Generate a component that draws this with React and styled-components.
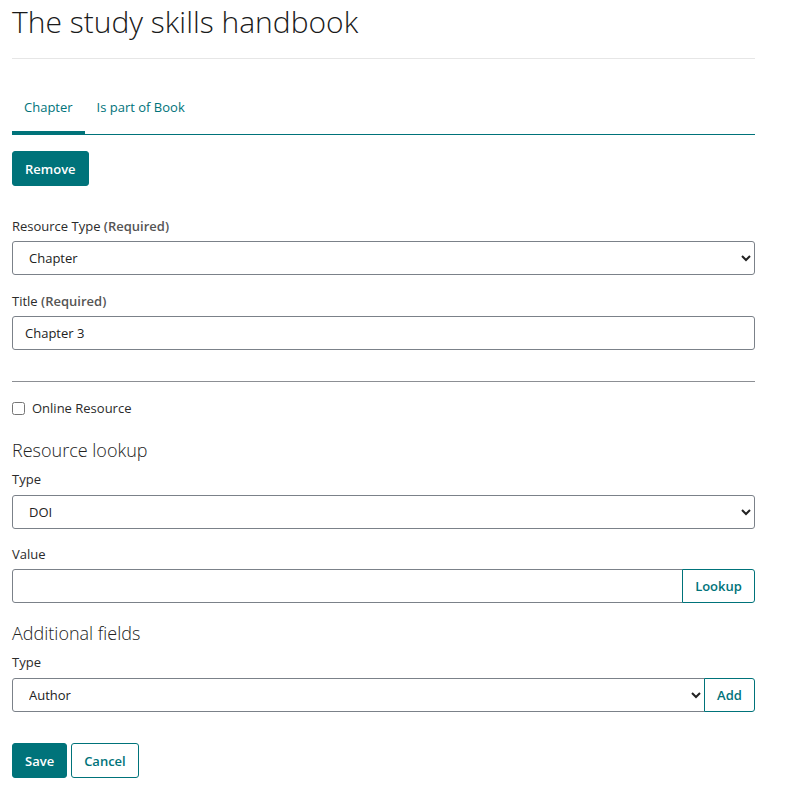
import React from "react";
import styled, { createGlobalStyle } from "styled-components";

const teal = "#00737a";
const inputBorder = "#7b8189";

const Global = createGlobalStyle`
  html, body { margin: 0; padding: 0; background: #fff; }
  body {
    font-family: "Open Sans", "Noto Sans", sans-serif;
    color: #222;
    font-size: 13px;
  }
  * { box-sizing: border-box; }
`;

const Page = styled.div`
  width: 743px;
  margin: 0 12px;
  padding-bottom: 24px;
`;

const Title = styled.h1`
  margin: 0;
  padding: 3px 0 17px;
  font-size: 30px;
  font-weight: 300;
  line-height: 38px;
  color: #1a1a1a;
  border-bottom: 1px solid #e6e6e6;
`;

const TabList = styled.div`
  display: flex;
  margin-top: 30px;
  border-bottom: 1px solid ${teal};
`;

const Tab = styled.div`
  padding: 9px 12px 15px;
  line-height: 18px;
  font-size: 13px;
  color: ${teal};
  margin-bottom: -1px;
  border-bottom: 4px solid ${(p) => (p.$active ? teal : "transparent")};
`;

const Button = styled.button`
  font-family: inherit;
  font-size: 13px;
  font-weight: 600;
  height: 35px;
  padding: 0 12px;
  border-radius: 3px;
  border: 1px solid ${teal};
  background: ${(p) => (p.$primary ? teal : "#fff")};
  color: ${(p) => (p.$primary ? "#fff" : teal)};
  cursor: pointer;
`;

const TopAction = styled.div`
  margin-top: 16px;
  margin-bottom: 31px;
`;

const Field = styled.div`
  margin-bottom: ${(p) => (p.$tight ? "16px" : "17px")};
`;

const Label = styled.label`
  display: block;
  font-size: 13px;
  line-height: 18px;
  color: #2b2b2b;
  margin-bottom: ${(p) => (p.$loose ? "7px" : "6px")};
`;

const Hint = styled.span`
  font-weight: 600;
  color: #555;
`;

const Select = styled.select`
  display: block;
  width: 100%;
  height: 34px;
  font-family: inherit;
  font-size: 13px;
  color: #222;
  padding: 0 8px 0 12px;
  border: 1px solid ${inputBorder};
  border-radius: ${(p) => (p.$joined ? "3px 0 0 3px" : "3px")};
  background: #fff;
  flex: 1;
`;

const Input = styled.input`
  display: block;
  width: 100%;
  height: 34px;
  font-family: inherit;
  font-size: 13px;
  color: #222;
  padding: 0 12px;
  border: 1px solid ${inputBorder};
  border-radius: ${(p) => (p.$joined ? "3px 0 0 3px" : "3px")};
  background: #fff;
  flex: 1;
`;

const Group = styled.div`
  display: flex;
  height: 34px;
`;

const GroupButton = styled(Button)`
  height: 34px;
  border-radius: 0 3px 3px 0;
  margin-left: -1px;
  width: ${(p) => p.$w}px;
  padding: 0;
`;

const Rule = styled.hr`
  border: 0;
  border-top: 1px solid #8c8f94;
  margin: 31px 0 17px;
`;

const CheckRow = styled.label`
  display: flex;
  align-items: center;
  gap: 7px;
  line-height: 18px;
  margin-bottom: 21px;
  color: #2b2b2b;
`;

const Check = styled.input`
  margin: 0;
  width: 13px;
  height: 13px;
`;

const Heading = styled.h2`
  margin: ${(p) => (p.$gap ? "18px" : "0")} 0 8px;
  font-size: 18px;
  font-weight: 300;
  line-height: 24px;
  color: #222;
`;

const Actions = styled.div`
  display: flex;
  gap: 4px;
  margin-top: 31px;
`;

export default function App() {
  return (
    <>
      <Global />
      <Page>
        <Title>The study skills handbook</Title>
        <TabList>
          <Tab $active>Chapter</Tab>
          <Tab>Is part of Book</Tab>
        </TabList>
        <TopAction>
          <Button $primary>Remove</Button>
        </TopAction>

        <Field>
          <Label>
            Resource Type <Hint>(Required)</Hint>
          </Label>
          <Select defaultValue="Chapter">
            <option>Chapter</option>
            <option>Book</option>
            <option>Article</option>
          </Select>
        </Field>
        <Label>
          Title <Hint>(Required)</Hint>
        </Label>
        <Input defaultValue="Chapter 3" />

        <Rule />

        <CheckRow>
          <Check type="checkbox" />
          Online Resource
        </CheckRow>

        <Heading>Resource lookup</Heading>
        <Field $tight>
          <Label $loose>Type</Label>
          <Select defaultValue="DOI">
            <option>DOI</option>
            <option>ISBN</option>
          </Select>
        </Field>
        <Label>Value</Label>
        <Group>
          <Input $joined />
          <GroupButton $w={73}>Lookup</GroupButton>
        </Group>

        <Heading $gap>Additional fields</Heading>
        <Label $loose>Type</Label>
        <Group>
          <Select $joined defaultValue="Author">
            <option>Author</option>
            <option>Editor</option>
          </Select>
          <GroupButton $w={51}>Add</GroupButton>
        </Group>

        <Actions>
          <Button $primary>Save</Button>
          <Button>Cancel</Button>
        </Actions>
      </Page>
    </>
  );
}
